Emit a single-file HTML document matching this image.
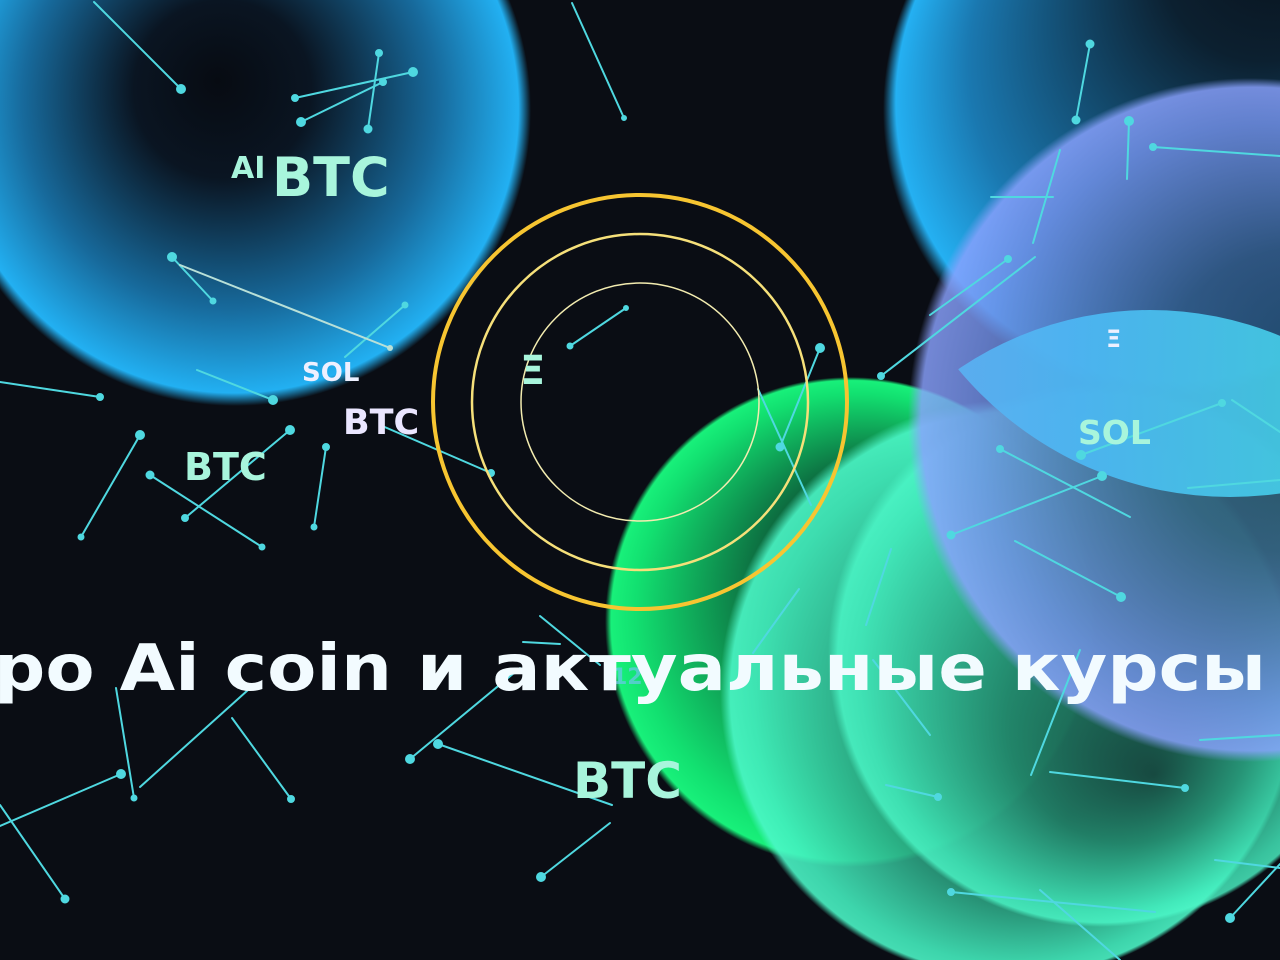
<!DOCTYPE html>
<html><head><meta charset="utf-8"><style>
html,body{margin:0;padding:0;background:#0a0d14;overflow:hidden}
svg{display:block}
text{font-family:"DejaVu Sans","Liberation Sans",sans-serif;font-weight:bold}
</style></head><body>
<svg width="1280" height="960" viewBox="0 0 1280 960" xmlns="http://www.w3.org/2000/svg">
<defs>
<radialGradient id="b1" cx="0.5" cy="0.5" r="0.5" fx="0.47" fy="0.45">
<stop offset="0" stop-color="#070b12"/><stop offset="0.3" stop-color="#0a1522"/><stop offset="0.7" stop-color="#176a9c"/><stop offset="0.96" stop-color="#22b0f2"/><stop offset="1" stop-color="#22b0f2" stop-opacity="0"/></radialGradient>
<radialGradient id="b2" cx="0.5" cy="0.5" r="0.5" fx="0.75" fy="0.1">
<stop offset="0" stop-color="#070b12"/><stop offset="0.35" stop-color="#0c2030"/><stop offset="0.8" stop-color="#1a78b0"/><stop offset="0.97" stop-color="#24b0f2"/><stop offset="1" stop-color="#24b0f2" stop-opacity="0"/></radialGradient>
<radialGradient id="pu" cx="0.5" cy="0.5" r="0.5" fx="0.65" fy="0.45">
<stop offset="0" stop-color="#16283e"/><stop offset="0.45" stop-color="#33507a"/><stop offset="0.85" stop-color="#7390e8"/><stop offset="0.97" stop-color="#8aa2ff"/><stop offset="1" stop-color="#8aa2ff" stop-opacity="0"/></radialGradient>
<linearGradient id="cyl" x1="0" y1="0" x2="1" y2="0">
<stop offset="0" stop-color="#6aa8f0"/><stop offset="0.4" stop-color="#4cb8f4"/><stop offset="1" stop-color="#3ee2dc"/></linearGradient>
<radialGradient id="gr" cx="0.5" cy="0.5" r="0.5" fx="0.62" fy="0.35">
<stop offset="0" stop-color="#08201a"/><stop offset="0.45" stop-color="#0c5e3a"/><stop offset="0.9" stop-color="#12e070"/><stop offset="0.98" stop-color="#18f07a"/><stop offset="1" stop-color="#18f07a" stop-opacity="0"/></radialGradient>
<radialGradient id="mi" cx="0.5" cy="0.5" r="0.5" fx="0.6" fy="0.72">
<stop offset="0" stop-color="#15403a"/><stop offset="0.45" stop-color="#238a6e"/><stop offset="0.9" stop-color="#44f0c0"/><stop offset="0.97" stop-color="#4cf8c8"/><stop offset="1" stop-color="#4cf8c8" stop-opacity="0"/></radialGradient>
<clipPath id="lens"><circle cx="1230" cy="144" r="353"/></clipPath>
</defs>
<rect width="1280" height="960" fill="#0a0d14"/>
<circle cx="235" cy="110" r="296" fill="url(#b1)"/>
<circle cx="1170" cy="110" r="287" fill="url(#b2)"/>
<circle cx="850" cy="622" r="245" fill="url(#gr)"/>
<circle cx="1010" cy="690" r="290" fill="url(#mi)" opacity="0.88"/>
<circle cx="1100" cy="655" r="272" fill="url(#mi)" opacity="0.8"/>
<circle cx="1250" cy="420" r="342" fill="url(#pu)" opacity="0.82"/>
<g clip-path="url(#lens)"><circle cx="1150" cy="650" r="340" fill="url(#cyl)" opacity="0.92"/></g>

<g stroke-linecap="round">
<g stroke="#4fd8e0" stroke-width="2" fill="#4fd8e0">
<line x1="94" y1="2" x2="181" y2="89"/><circle cx="181" cy="89" r="4"/>
<line x1="572" y1="3" x2="624" y2="118"/><circle cx="624" cy="118" r="2"/>
<line x1="379" y1="53" x2="368" y2="129"/><circle cx="379" cy="53" r="3"/><circle cx="368" cy="129" r="3.5"/>
<line x1="295" y1="98" x2="413" y2="72"/><circle cx="295" cy="98" r="3"/><circle cx="413" cy="72" r="4"/>
<line x1="301" y1="122" x2="383" y2="82"/><circle cx="301" cy="122" r="4"/><circle cx="383" cy="82" r="3"/>
<line x1="172" y1="257" x2="213" y2="301"/><circle cx="172" cy="257" r="4"/><circle cx="213" cy="301" r="2.5"/>
<line x1="405" y1="305" x2="345" y2="357"/><circle cx="405" cy="305" r="2.5"/>
<line x1="0" y1="382" x2="100" y2="397"/><circle cx="100" cy="397" r="3"/>
<line x1="197" y1="370" x2="273" y2="400"/><circle cx="273" cy="400" r="4"/>
<line x1="140" y1="435" x2="81" y2="537"/><circle cx="140" cy="435" r="4"/><circle cx="81" cy="537" r="2.5"/>
<line x1="150" y1="475" x2="262" y2="547"/><circle cx="150" cy="475" r="3.5"/><circle cx="262" cy="547" r="2.5"/>
<line x1="290" y1="430" x2="185" y2="518"/><circle cx="290" cy="430" r="4"/><circle cx="185" cy="518" r="3"/>
<line x1="326" y1="447" x2="314" y2="527"/><circle cx="326" cy="447" r="3"/><circle cx="314" cy="527" r="2.5"/>
<line x1="380" y1="425" x2="491" y2="473"/><circle cx="491" cy="473" r="3"/>
<line x1="570" y1="346" x2="626" y2="308"/><circle cx="570" cy="346" r="2.5"/><circle cx="626" cy="308" r="2"/>
<line x1="820" y1="348" x2="780" y2="447"/><circle cx="820" cy="348" r="4"/><circle cx="780" cy="447" r="3.5"/>
<line x1="758" y1="389" x2="811" y2="505"/>
<line x1="881" y1="376" x2="1035" y2="257"/><circle cx="881" cy="376" r="3"/>
<line x1="930" y1="315" x2="1008" y2="259"/><circle cx="1008" cy="259" r="3"/>
<line x1="1090" y1="44" x2="1076" y2="120"/><circle cx="1090" cy="44" r="3.5"/><circle cx="1076" cy="120" r="3.5"/>
<line x1="1129" y1="121" x2="1127" y2="179"/><circle cx="1129" cy="121" r="4"/>
<line x1="1153" y1="147" x2="1280" y2="156"/><circle cx="1153" cy="147" r="3"/>
<line x1="1060" y1="150" x2="1033" y2="243"/>
<line x1="991" y1="197" x2="1053" y2="197"/>
<line x1="1081" y1="455" x2="1222" y2="403"/><circle cx="1081" cy="455" r="4"/><circle cx="1222" cy="403" r="3"/>
<line x1="1232" y1="400" x2="1280" y2="432"/>
<line x1="1000" y1="449" x2="1130" y2="517"/><circle cx="1000" cy="449" r="3"/>
<line x1="951" y1="535" x2="1102" y2="476"/><circle cx="951" cy="535" r="3.5"/><circle cx="1102" cy="476" r="4"/>
<line x1="1015" y1="541" x2="1121" y2="597"/><circle cx="1121" cy="597" r="4"/>
<line x1="891" y1="549" x2="866" y2="625"/>
<line x1="799" y1="589" x2="753" y2="653"/>
<line x1="1080" y1="650" x2="1031" y2="775"/>
<line x1="1050" y1="772" x2="1185" y2="788"/><circle cx="1185" cy="788" r="3"/>
<line x1="1200" y1="740" x2="1280" y2="735"/>
<line x1="1188" y1="488" x2="1280" y2="480"/>
<line x1="540" y1="616" x2="600" y2="665"/>
<line x1="523" y1="642" x2="560" y2="644"/>
<line x1="410" y1="759" x2="520" y2="668"/><circle cx="410" cy="759" r="4"/>
<line x1="438" y1="744" x2="612" y2="805"/><circle cx="438" cy="744" r="4"/>
<line x1="116" y1="688" x2="134" y2="798"/><circle cx="134" cy="798" r="2.5"/>
<line x1="248" y1="690" x2="140" y2="787"/>
<line x1="232" y1="718" x2="291" y2="799"/><circle cx="291" cy="799" r="3"/>
<line x1="0" y1="826" x2="121" y2="774"/><circle cx="121" cy="774" r="4"/>
<line x1="0" y1="805" x2="65" y2="899"/><circle cx="65" cy="899" r="3.5"/>
<line x1="610" y1="823" x2="541" y2="877"/><circle cx="541" cy="877" r="4"/>
<line x1="886" y1="785" x2="938" y2="797"/><circle cx="938" cy="797" r="3"/>
<line x1="873" y1="660" x2="930" y2="735"/>
<line x1="951" y1="892" x2="1155" y2="912"/><circle cx="951" cy="892" r="3"/>
<line x1="1230" y1="918" x2="1280" y2="864"/><circle cx="1230" cy="918" r="4"/>
<line x1="1215" y1="860" x2="1280" y2="868"/>
<line x1="1040" y1="890" x2="1120" y2="960"/>
</g>
<line x1="180" y1="265" x2="390" y2="348" stroke="#b8e0d8" stroke-width="2"/>
<circle cx="390" cy="348" r="3" fill="#b8e0d8"/>
</g>

<circle cx="640" cy="402" r="207" fill="none" stroke="#f7c531" stroke-width="4"/>
<circle cx="640" cy="402" r="168" fill="none" stroke="#f6e07a" stroke-width="2.5"/>
<circle cx="640" cy="402" r="119" fill="none" stroke="#f3ecb0" stroke-width="1.5"/>

<text x="231" y="178" font-size="30" fill="#a8f5dc">AI</text>
<text x="272" y="196" font-size="54" fill="#a8f5dc">BTC</text>
<text x="302" y="381" font-size="26" fill="#eef0ff">SOL</text>
<text x="343" y="434" font-size="35" fill="#eae6ff">BTC</text>
<text x="184" y="480" font-size="38" fill="#a8f5dc">BTC</text>
<text x="520" y="384" font-size="40" fill="#a8f5dc">Ξ</text>
<text x="1106" y="347" font-size="24" fill="#eef0ff">Ξ</text>
<text x="1078" y="444" font-size="33" fill="#a8f5dc">SOL</text>
<text x="573" y="798" font-size="50" fill="#a8f5dc">BTC</text>
<text x="612" y="684" font-size="22" fill="#7ac0ff" opacity="0.6">12</text>
<text x="-6" y="690" font-size="64" fill="#f2fbff" textLength="1272" lengthAdjust="spacingAndGlyphs">ро Ai coin и актуальные курсы</text>
</svg>
</body></html>
